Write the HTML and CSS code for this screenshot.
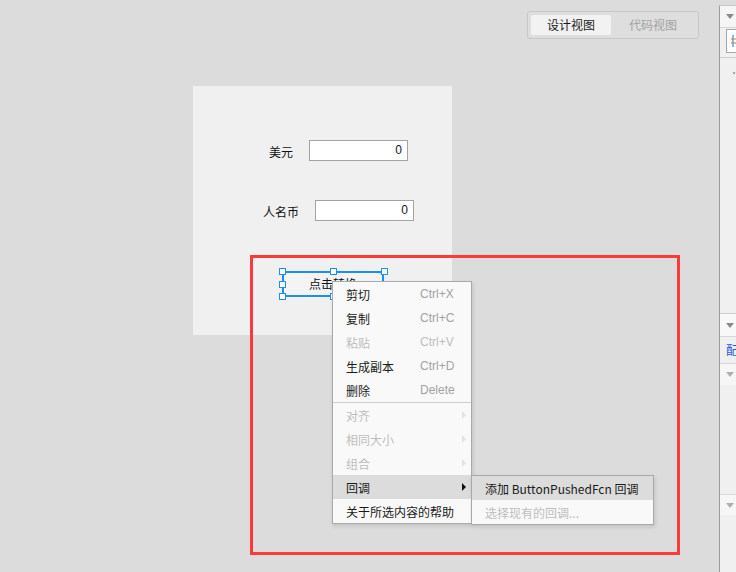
FILE: index.html
```html
<!DOCTYPE html>
<html lang="zh-CN">
<head>
<meta charset="utf-8">
<title>App Designer</title>
<link rel="stylesheet" href="styles.css">
</head>
<body>
<div class="app">
  <main class="stage">
    <header class="toolbar">
      <div class="view-switch">
        <span class="view-tab is-active">设计视图</span>
        <span class="view-tab view-tab-code">代码视图</span>
      </div>
    </header>

    <section class="canvas">
      <span class="ui-label lbl-usd">美元</span>
      <div class="ui-field fld-usd">0</div>
      <span class="ui-label lbl-cny">人名币</span>
      <div class="ui-field fld-cny">0</div>
      <div class="ui-button btn-convert">点击转换
        <span class="sel-frame"></span>
        <span class="handle h-tl"></span>
        <span class="handle h-tm"></span>
        <span class="handle h-tr"></span>
        <span class="handle h-ml"></span>
        <span class="handle h-mr"></span>
        <span class="handle h-bl"></span>
        <span class="handle h-bm"></span>
        <span class="handle h-br"></span>
      </div>
    </section>

    <!-- right-click menu for the selected button -->
    <ul class="menu ctx-menu">
      <li class="menu-item"><span class="mi-label">剪切</span><span class="mi-key">Ctrl+X</span></li>
      <li class="menu-item"><span class="mi-label">复制</span><span class="mi-key">Ctrl+C</span></li>
      <li class="menu-item is-disabled"><span class="mi-label">粘贴</span><span class="mi-key">Ctrl+V</span></li>
      <li class="menu-item"><span class="mi-label">生成副本</span><span class="mi-key">Ctrl+D</span></li>
      <li class="menu-item"><span class="mi-label">删除</span><span class="mi-key">Delete</span></li>
      <li class="menu-sep"></li>
      <li class="menu-item is-disabled has-sub"><span class="mi-label">对齐</span></li>
      <li class="menu-item is-disabled has-sub"><span class="mi-label">相同大小</span></li>
      <li class="menu-item is-disabled has-sub"><span class="mi-label">组合</span></li>
      <li class="menu-item is-hover has-sub"><span class="mi-label">回调</span></li>
      <li class="menu-item"><span class="mi-label">关于所选内容的帮助</span></li>
    </ul>

    <ul class="menu sub-menu">
      <li class="menu-item is-hover"><span>添加 ButtonPushedFcn 回调</span></li>
      <li class="menu-item is-disabled"><span>选择现有的回调...</span></li>
    </ul>

    <div class="callout"></div>
  </main>

  <aside class="side">
    <div class="side-head"><span class="caret"></span></div>
    <div class="side-tool">
      <div class="tool-box">
        <svg width="8" height="14" viewBox="0 0 8 14">
          <path d="M2 1v12" stroke="#3a8ee6" stroke-width="1.2"/>
          <path d="M0 5h5M0 9h5" stroke="#c07a3a" stroke-width="1"/>
        </svg>
      </div>
    </div>
    <div class="side-body"><span class="dots">···</span></div>
    <div class="side-head side-head-2"><span class="caret"></span></div>
    <div class="side-link">配置</div>
    <div class="side-sub"><span class="caret"></span></div>
    <div class="side-fill"></div>
    <div class="side-sub side-sub-2"><span class="caret"></span></div>
    <div class="side-rest"></div>
  </aside>
</div>
</body>
</html>
```

FILE: styles.css
```css
* { box-sizing: border-box; }

html, body {
  margin: 0;
  padding: 0;
}

body {
  width: 736px;
  height: 572px;
  overflow: hidden;
  background: #dcdcdc;
  font-family: "Noto Sans CJK SC", "Liberation Sans", sans-serif;
  font-size: 12px;
  color: #1a1a1a;
}

.app {
  display: flex;
  height: 572px;
}

/* ---------- design stage ---------- */
.stage {
  position: relative;
  width: 719px;
  flex: none;
}

.toolbar {
  display: flex;
  justify-content: flex-end;
  padding: 11px 20px 0 0;
}

.view-switch {
  display: flex;
  padding: 3px;
  border: 1px solid #c7c7c7;
  border-radius: 3px;
  background: #dedede;
}

.view-tab {
  width: 84px;
  height: 20px;
  line-height: 20px;
  text-align: center;
  color: #a3a3a3;
  font-size: 12px;
}

.view-tab.is-active {
  width: 80px;
  background: #f2f2f2;
  border-radius: 2px;
  color: #1a1a1a;
}

.canvas {
  position: relative;
  margin: 47px 0 0 193px;
  width: 259px;
  height: 249px;
  background: #f0f0f0;
}

.ui-label {
  position: absolute;
  line-height: 16px;
  color: #111;
}

.lbl-usd { left: 76px; top: 58px; }
.lbl-cny { left: 70px; top: 118px; }

.ui-field {
  position: absolute;
  width: 99px;
  height: 21px;
  padding-right: 5px;
  border: 1px solid #a3a3a3;
  background: #fff;
  text-align: right;
  font-family: "Liberation Sans", sans-serif;
  font-size: 12px;
  line-height: 19px;
  color: #14142a;
}

.fld-usd { left: 116px; top: 54px; }
.fld-cny { left: 122px; top: 114px; }

.ui-button {
  position: absolute;
  left: 90px;
  top: 186px;
  width: 100px;
  height: 24px;
  border: 1px solid #a0a0a0;
  border-radius: 4px;
  background: #f4f4f4;
  text-align: center;
  line-height: 21px;
  color: #111;
}

.sel-frame {
  position: absolute;
  left: -2px;
  top: -2px;
  right: -2px;
  bottom: -2px;
  border: 2px solid #1e8ff0;
}

.handle {
  position: absolute;
  width: 7px;
  height: 7px;
  border: 1px solid #1e8ff0;
  background: #fff;
}

.h-tl { left: -5px;  top: -5px; }
.h-tm { left: 46px;  top: -5px; }
.h-tr { left: 97px;  top: -5px; }
.h-ml { left: -5px;  top: 8px; }
.h-mr { left: 97px;  top: 8px; }
.h-bl { left: -5px;  top: 20px; }
.h-bm { left: 46px;  top: 20px; }
.h-br { left: 97px;  top: 20px; }

/* ---------- context menus ---------- */
.menu {
  position: absolute;
  margin: 0;
  padding: 0;
  list-style: none;
  background: #f9f9f9;
  border: 1px solid #a9a9a9;
  box-shadow: 1px 2px 4px rgba(0, 0, 0, 0.12);
}

.ctx-menu {
  left: 332px;
  top: 281px;
  width: 140px;
  z-index: 2;
}

.sub-menu {
  left: 471px;
  top: 475px;
  width: 183px;
  z-index: 3;
}

.menu-item {
  position: relative;
  display: flex;
  align-items: center;
  height: 24px;
  padding-left: 13px;
  white-space: nowrap;
  color: #1a1a1a;
}

.mi-label {
  width: 74px;
  flex: none;
}

.mi-key {
  font-family: "Liberation Sans", sans-serif;
  color: #a2a2a2;
}

.menu-item.is-disabled,
.menu-item.is-disabled .mi-key {
  color: #bdbdbd;
}

.menu-item.is-hover {
  background: #dcdcdc;
}

.has-sub::after {
  content: "";
  position: absolute;
  right: 5px;
  top: 8px;
  border-left: 4px solid #111;
  border-top: 4px solid transparent;
  border-bottom: 4px solid transparent;
}

.has-sub.is-disabled::after {
  border-left-color: #e2e2e2;
}

.menu-sep {
  height: 1px;
  background: #cdcdcd;
}

/* annotation frame */
.callout {
  position: absolute;
  left: 250px;
  top: 255px;
  width: 430px;
  height: 300px;
  border: 3px solid #fb3b3b;
  z-index: 4;
}

/* ---------- property side panel ---------- */
.side {
  flex: 1;
  margin-top: 5px;
  border-left: 1px solid #9c9c9c;
  border-top: 1px solid #c9c9c9;
  background: #f0f0f0;
  display: flex;
  flex-direction: column;
  overflow: hidden;
}

.caret {
  display: block;
  width: 0;
  height: 0;
  margin-left: 6px;
  border-top: 5px solid #8a8a8a;
  border-left: 4px solid transparent;
  border-right: 4px solid transparent;
}

.side-head {
  height: 22px;
  flex: none;
  display: flex;
  align-items: center;
  background: #f5f5f5;
  border-bottom: 1px solid #d6d6d6;
}

.side-tool {
  height: 30px;
  flex: none;
  padding: 1px 0 0 6px;
  border-bottom: 1px solid #d0d0d0;
}

.tool-box {
  width: 30px;
  height: 24px;
  border: 1px solid #a6a6a6;
  background: #fff;
  padding: 4px 0 0 4px;
}

.tool-box svg { display: block; }

.side-body {
  height: 256px;
  flex: none;
  padding: 9px 0 0 9px;
  color: #9a9a9a;
  font-size: 10px;
  line-height: 12px;
  letter-spacing: -1px;
  border-bottom: 1px solid #d0d0d0;
}

.side-head-2 {
  height: 23px;
  background: #f8f8f8;
}

.side-link {
  height: 27px;
  flex: none;
  padding-left: 6px;
  line-height: 26px;
  color: #2a55d8;
  white-space: nowrap;
  border-bottom: 1px solid #d6d6d6;
}

.side-sub {
  height: 21px;
  flex: none;
  display: flex;
  align-items: center;
  background: #f6f6f6;
}

.side-sub .caret {
  border-top-color: #b0b0b0;
}

.side-fill {
  height: 110px;
  flex: none;
  border-bottom: 1px solid #dadada;
}

.side-sub-2 {
  height: 20px;
}

.side-rest {
  flex: 1;
}
```
